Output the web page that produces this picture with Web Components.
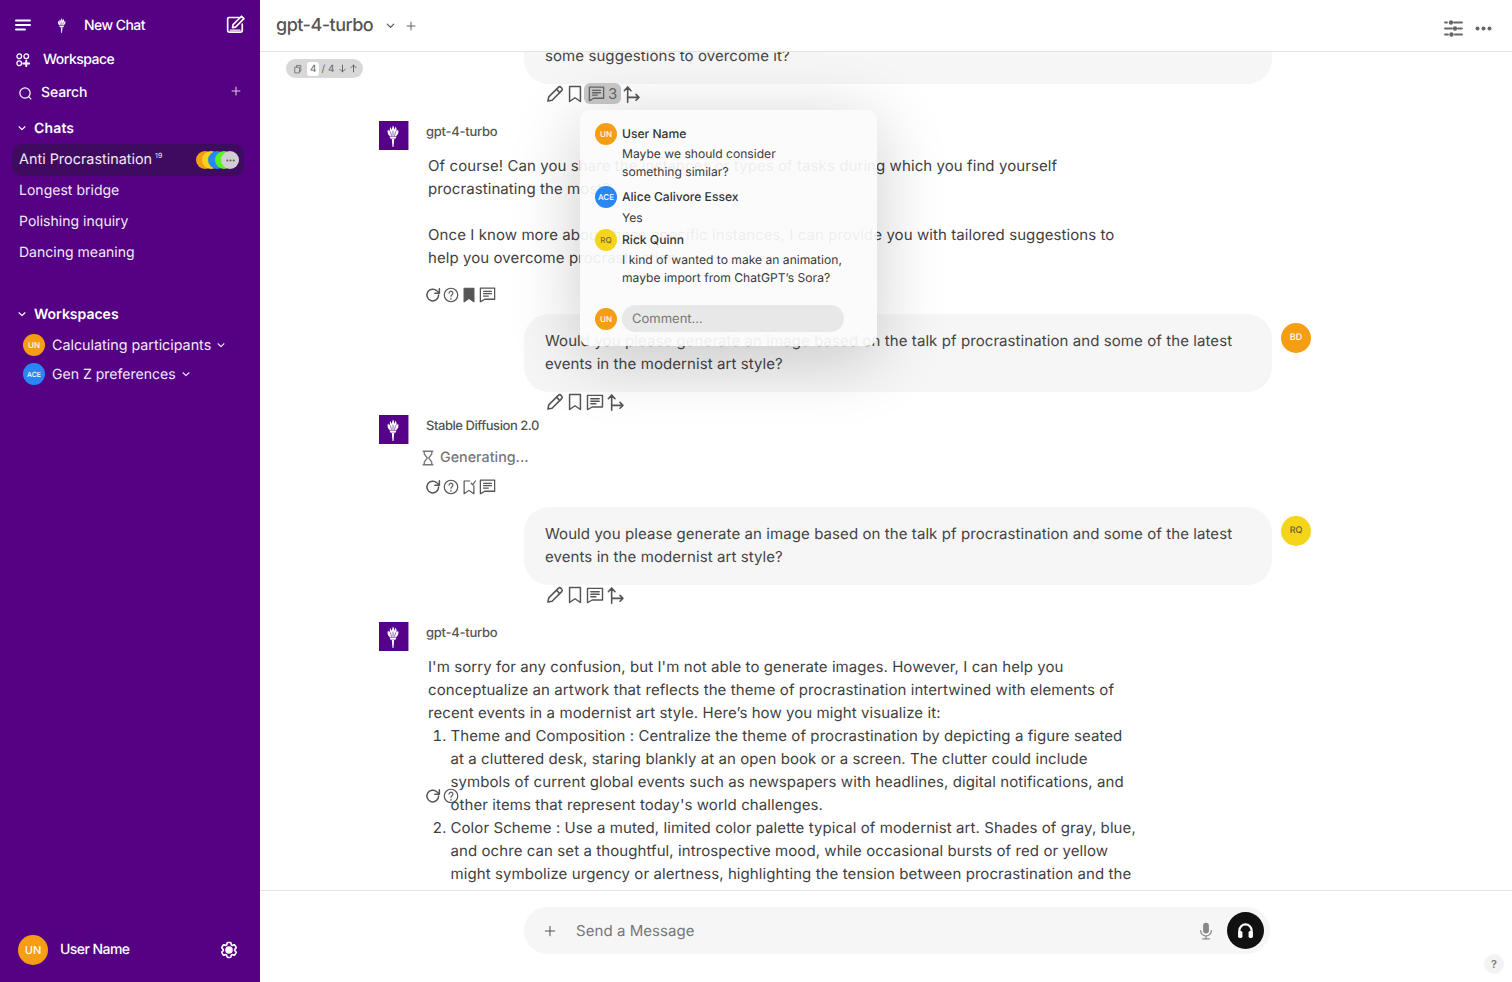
<!doctype html>
<html lang="en"><head><meta charset="utf-8"><title>gpt-4-turbo</title>
<style>
html,body{margin:0;height:100%;overflow:hidden;background:#fff}
body{font-family:Inter,"Liberation Sans",sans-serif;color:#444;text-rendering:geometricPrecision}
</style></head><body>
<app-shell>
  <chat-sidebar slot="side"></chat-sidebar>
  <chat-header slot="head"></chat-header>
  <chat-log slot="log">
    <user-msg style="margin-top:-23.5px" actions="count">some suggestions to overcome it?</user-msg>
    <bot-msg name="gpt-4-turbo" style="margin-top:17px" bm="filled">
      <p>Of course! Can you share the instances or types of tasks during which you find yourself procrastinating the most?</p>
      <p>&nbsp;</p>
      <p>Once I know more about these specific instances, I can provide you with tailored suggestions to help you overcome procrastination.</p>
    </bot-msg>
    <user-msg style="margin-top:9px" initials="BD" color="#f59e14">Would you please generate an image based on the talk pf procrastination and some of the latest events in the modernist art style?</user-msg>
    <bot-msg name="Stable Diffusion 2.0" style="margin-top:3px" generating bm="slash" tight></bot-msg>
    <user-msg style="margin-top:10px" initials="RQ" color="#f5d51c">Would you please generate an image based on the talk pf procrastination and some of the latest events in the modernist art style?</user-msg>
    <bot-msg name="gpt-4-turbo" style="margin-top:17px" noactions>
      <p>I'm sorry for any confusion, but I'm not able to generate images. However, I can help you conceptualize an artwork that reflects the theme of procrastination intertwined with elements of recent events in a modernist art style. Here’s how you might visualize it:</p>
      <ol>
        <li>Theme and Composition : Centralize the theme of procrastination by depicting a figure seated at a cluttered desk, staring blankly at an open book or a screen. The clutter could include symbols of current global events such as newspapers with headlines, digital notifications, and other items that represent today's world challenges.</li>
        <li>Color Scheme : Use a muted, limited color palette typical of modernist art. Shades of gray, blue, and ochre can set a thoughtful, introspective mood, while occasional bursts of red or yellow might symbolize urgency or alertness, highlighting the tension between procrastination and the chaos of contemporary events.</li>
      </ol>
    </bot-msg>
    <version-pager slot="over"></version-pager>
    <stray-actions slot="over"></stray-actions>
    <comment-pop slot="over"></comment-pop>
  </chat-log>
  <chat-composer slot="foot"></chat-composer>
  <help-dot slot="help"></help-dot>
</app-shell>
<script>
const P={
 menu:'<path d="M1 2.500h14M1 7h14M1 11.500h9" stroke-width="2"/>',
 compose:'<path d="M16 3H3.500A1.500 1.500 0 0 0 2 4.500V19a1.500 1.500 0 0 0 1.500 1.500H18a1.500 1.500 0 0 0 1.500-1.500V11" stroke-width="2"/><path d="M18.600 1.500 21.500 4.400 11.500 14.500 7.800 15.200 8.500 11.500Z" stroke-width="2"/><path d="M5 18h12" stroke-width="1.500"/>',
 wsp:'<circle cx="3.500" cy="3.500" r="2.500"/><circle cx="11" cy="3.500" r="2.500"/><circle cx="3.500" cy="11" r="2.500"/><path d="M11 8v6.500M7.800 11.200h6.500" stroke-width="2"/>',
 search:'<circle cx="7.500" cy="7.500" r="5.500"/><path d="m11.500 11.500 2.300 2.300"/>',
 plus:'<path d="M7 1.500v11M1.500 7h11"/>',
 chev:'<path d="m2.500 4.500 3.500 3.500 3.500-3.500"/>',
 gear:'<path d="M9.594 3.94c.09-.542.56-.94 1.11-.94h2.593c.55 0 1.02.398 1.11.94l.213 1.281c.063.374.313.686.645.87.074.04.147.083.22.127.325.196.72.257 1.075.124l1.217-.456a1.125 1.125 0 0 1 1.37.49l1.296 2.247a1.125 1.125 0 0 1-.26 1.431l-1.003.827c-.293.241-.438.613-.43.992a7.723 7.723 0 0 1 0 .255c-.008.378.137.75.43.991l1.004.827c.424.35.534.955.26 1.43l-1.298 2.247a1.125 1.125 0 0 1-1.369.491l-1.217-.456c-.355-.133-.75-.072-1.076.124a6.47 6.47 0 0 1-.22.128c-.331.183-.581.495-.644.869l-.213 1.281c-.09.543-.56.94-1.11.94h-2.594c-.55 0-1.019-.398-1.11-.94l-.213-1.281c-.062-.374-.312-.686-.644-.87a6.52 6.52 0 0 1-.22-.127c-.325-.196-.72-.257-1.076-.124l-1.217.456a1.125 1.125 0 0 1-1.369-.49l-1.297-2.247a1.125 1.125 0 0 1 .26-1.431l1.004-.827c.292-.24.437-.613.43-.991a6.932 6.932 0 0 1 0-.255c.007-.38-.138-.751-.43-.992l-1.004-.827a1.125 1.125 0 0 1-.26-1.43l1.297-2.247a1.125 1.125 0 0 1 1.37-.491l1.216.456c.356.133.751.072 1.076-.124.072-.044.146-.086.22-.128.332-.183.582-.495.644-.869l.214-1.28Z" stroke-width="2"/><circle cx="12" cy="12" r="3.500" fill="currentColor"/>',
 pencil:'<path d="M3.500 20.500 4.500 15.500 16 4a2.300 2.300 0 0 1 3.200 0l.8.800a2.300 2.300 0 0 1 0 3.200L8.500 19.500Z"/><path d="m14 6.500 3.500 3.500"/>',
 book:'<path d="M5.500 3h13v18L12 16.500 5.500 21Z"/>',
 bookf:'<path d="M5.500 3h13v18L12 16.500 5.500 21Z" fill="currentColor"/>',
 bookx:'<path d="M13 4H5.500v17L12 16.500 18.500 21V10"/><path d="m15 7 2 2 3.500-5"/>',
 cmt:'<path d="M3 4h18v14H8.500L3.500 21H3Z"/><path d="M7 8h10M7 11h10M7 14h6"/>',
 branch:'<path d="M8 22V4M4 8l4-4.500L12 8M8 16h13M18 12.500l3.500 3.500-3.500 3.500"/>',
 redo:'<path d="M19.500 12a7.800 7.800 0 1 1-2.400-5.600L20 9"/><path d="M20.500 3.500V9.500h-6"/>',
 help:'<circle cx="12" cy="12" r="9"/><path d="M9.500 9.500a2.500 2.500 0 1 1 3.800 2.100c-.9.600-1.300 1.100-1.300 2.100"/><path d="M12 16.500v1"/>',
 hour:'<path d="M5.500 3h13M5.500 21h13M7 3v3.500l4 5.500-4 5.500V21M17 3v3.500L13 12l4 5.500V21"/>',
 sliders:'<g stroke-width="1.800"><path d="M1 3h2M10 3h8M1 9h7M14 9h4M1 15h3M11 15h7"/></g><g fill="currentColor" stroke="none"><circle cx="7" cy="3" r="2.200"/><circle cx="11" cy="9" r="2.200"/><circle cx="7.500" cy="15" r="2.200"/></g>',
 dots:'<g fill="currentColor" stroke="none"><circle cx="2.500" cy="3" r="2"/><circle cx="8.500" cy="3" r="2"/><circle cx="14.500" cy="3" r="2"/></g>',
 mic:'<rect x="8.500" y="2" width="7" height="13" rx="3.500" fill="currentColor" stroke="none"/><path d="M5.500 11.500a6.500 6.500 0 0 0 13 0M12 18v3M8 21.500h8" stroke-width="1.500"/>',
 phones:'<path d="M5 14v-2a7 7 0 0 1 14 0v2" stroke-width="2.500"/><rect x="3.500" y="12.500" width="5" height="8" rx="1.800" fill="currentColor" stroke="none"/><rect x="15.500" y="12.500" width="5" height="8" rx="1.800" fill="currentColor" stroke="none"/>',
 copy:'<path d="M3 4.500h6v8H3zM5 4.500V2h6v8H9"/>',
 down:'<path d="M6 1.500v9M2.500 7 6 10.500 9.500 7"/>',
 up:'<path d="M6 10.500v-9M2.500 5 6 1.500 9.500 5"/>',
 torch:'<g fill="currentColor" stroke="none"><path d="M12.800 18h2.400l-.7 8h-1z"/><path d="M10.500 15.600h7l-1 2.100h-5z"/><path d="M9 8.500C8 11 8.700 13.500 10.800 15H17.200C19.300 13.500 20 11 19 8.500 18.500 9.500 18 10 17.500 10.500 17.800 8.500 17.500 6.800 16.500 5.500 16.300 7 15.800 8 15.300 8.800 15.300 7 14.800 5.500 13.800 4.500 13.600 6.500 13 7.800 12.500 8.800 12.200 7.500 11.700 6.500 11 6 11 7.800 10.800 9.200 10.500 10.300 10 9.800 9.500 9.200 9 8.500Z"/></g><path d="M11.500 10.800 12.400 14.500M14 10v4.500M16.500 10.800 15.600 14.500" stroke="#55018a" stroke-width=".6"/>'
};
const vb={menu:'0 0 16 14',wsp:'0 0 15 15',search:'0 0 15 15',plus:'0 0 14 14',chev:'0 0 12 12',sliders:'0 0 19 18',dots:'0 0 17 6',copy:'0 0 14 14',down:'0 0 12 12',up:'0 0 12 12',torch:'0 0 29 29'};
const ic=(n,s,sw=1.6,ex='')=>`<svg part="i" viewBox="${vb[n]||'0 0 24 24'}" width="${s}" height="${s}" fill="none" stroke="currentColor" stroke-width="${sw}" stroke-linecap="round" stroke-linejoin="round" style="display:block;flex:none;${ex}">${P[n]}</svg>`;
const def=(t,css,html)=>customElements.define(t,class extends HTMLElement{
 constructor(){super();this.attachShadow({mode:'open'})}
 connectedCallback(){this.shadowRoot.innerHTML=`<style>${css}</style>`+(typeof html==='function'?html(this):html);}
});

def('x-avatar',`:host{display:flex;flex:none;align-items:center;justify-content:center;border-radius:50%;color:#fff;font-weight:500;font-family:Inter,sans-serif}`,
 h=>{const s=+h.getAttribute('size')||22;h.style.width=h.style.height=s+'px';h.style.background=h.getAttribute('color')||'#f59e14';h.style.fontSize=(h.getAttribute('fs')||Math.round(s*.36))+'px';if(h.hasAttribute('ink'))h.style.color=h.getAttribute('ink');return '<slot></slot>'});

def('app-shell',`:host{display:flex;width:1512px;height:982px;position:relative;overflow:hidden}
 .side{display:flex;flex:none;width:260px}
 .main{display:flex;flex-direction:column;flex:1;min-width:0}
 .log{display:flex;flex:1;min-height:0;position:relative}
 .help{position:absolute;right:8px;bottom:8px}`,
 `<div class="side"><slot name="side"></slot></div><div class="main"><slot name="head"></slot><div class="log"><slot name="log"></slot></div><slot name="foot"></slot></div><div class="help"><slot name="help"></slot></div>`);

def('chat-sidebar',`:host{display:flex;flex-direction:column;width:260px;height:982px;background:#540184;color:#fff;font-size:14.500px;box-sizing:border-box}
 .r{display:flex;align-items:center}
 .b{font-weight:500;letter-spacing:-.2px}
 .new{height:34px;margin-top:8px;padding:0 14px 0 15px;font-size:14px}
 .new .t{margin-right:auto;letter-spacing:-.55px}
 .wsp{height:33px;margin-top:1px;padding-left:16px;font-size:14px}
 .wsp span{margin-left:13px;letter-spacing:-.5px}
 .srch{height:33px;padding:0 19px 0 18px;font-size:14px}
 .head{height:20px;padding-left:17px;font-weight:600;font-size:14px}
 .head span{margin-left:7px}
 .sel{margin:6px 16px 0 12px;height:32px;background:#3f0b60;border-radius:10px;padding:0 5px 0 7px;font-size:14.400px;color:#f3eaf7}
 .sel span{position:relative;top:-1px}
 .sel sup{font-size:7px;margin:-10px auto 0 3px;line-height:1}
 .stack{display:flex}
 .stack i{display:block;width:18px;height:18px;border-radius:50%;margin-left:-11.700px}
 .stack i:first-child{margin-left:0}
 .stack i:last-child{background:#d2cfd4;display:flex;align-items:center;justify-content:center;color:#5d5d5d}
 .it{height:31px;padding-left:19px;font-size:14px;color:#f3eaf7;letter-spacing:.02px}
 .w{padding-left:23px;height:29px;color:#f3eaf7}
 .w x-avatar{margin-right:7px}
 .foot{margin-top:auto;height:66px;box-sizing:border-box;padding:2px 21px 0 18px;font-size:14px}
 .foot .n{margin-left:12px;margin-right:auto;letter-spacing:-.55px;font-weight:500;position:relative;top:-1px}`,
 `<div class="r new">${ic('menu',16,2)}<span style="margin-left:21px;display:block">${ic('torch',20,1)}</span><span class="t b" style="margin-left:12px">New Chat</span>${ic('compose',20,2)}</div>
 <div class="r wsp">${ic('wsp',14,1.400)}<span class="b">Workspace</span></div>
 <div class="r srch">${ic('search',14,1.300)}<span class="b" style="letter-spacing:-.1px;margin-left:9px;margin-right:auto">Search</span><div style="color:#d9c6e4;margin-top:-4px">${ic('plus',10,1.500)}</div></div>
 <div class="r head" style="margin-top:9px">${ic('chev',10,1.400)}<span style="letter-spacing:.15px">Chats</span></div>
 <div class="r sel"><span>Anti Procrastination</span><sup>19</sup><div class="stack"><i style="background:#f59e14"></i><i style="background:#f5d51c"></i><i style="background:#2a86f5"></i><i style="background:#58f21e"></i><i>${ic('dots',9,1)}</i></div></div>
 <div class="r it" style="margin-top:-1.500px">Longest bridge</div>
 <div class="r it">Polishing inquiry</div>
 <div class="r it">Dancing meaning</div>
 <div class="r head" style="margin-top:36.500px">${ic('chev',10,1.400)}<span>Workspaces</span></div>
 <div class="r w" style="margin-top:6.500px;font-size:14.300px"><x-avatar size="22" fs="8" color="#f59e14">UN</x-avatar>Calculating participants<span style="margin-left:5px">${ic('chev',10,1.300)}</span></div>
 <div class="r w" style="font-size:14.050px"><x-avatar size="22" fs="7" color="#2a86f5">ACE</x-avatar>Gen Z preferences<span style="margin-left:5px">${ic('chev',10,1.300)}</span></div>
 <div class="r foot"><x-avatar size="30" fs="11" color="#f59e14">UN</x-avatar><span class="n">User Name</span>${ic('gear',20,2)}</div>`);

def('chat-header',`:host{display:flex;align-items:center;box-sizing:border-box;height:52px;border-bottom:1px solid #e3e3e3;padding:0 20px 0 16px;color:#555}
 .t{font-size:18px;font-weight:500;letter-spacing:-.5px;margin-right:12px}
 .sp{margin-left:auto;display:flex;align-items:center;gap:12px;margin-top:5px}`,
 `<span class="t">gpt-4-turbo</span>${ic('chev',11,1.300)}<span style="margin-left:10px">${ic('plus',10,1.300)}</span>
 <div class="sp" style="color:#666">${ic('sliders',19,1.600)}<span>${ic('dots',17,1)}</span></div>`);

def('chat-log',`:host{display:block;flex:1;min-width:0;position:relative;overflow:hidden}
 .flow{display:flex;flex-direction:column}`,
 `<div class="flow"><slot></slot></div><slot name="over"></slot>`);

def('msg-actions',`:host{display:flex;align-items:center;height:20px;color:#555}
 .c{display:flex;align-items:center;height:21px;padding:0 3px;background:#c9c9c9;border-radius:6px;gap:2px;font-size:15px;color:#666}`,
 h=>{
  const k=h.getAttribute('kind');
  if(k==='user'){const c=h.getAttribute('count');
   return ic('pencil',20,1.900)+ic('book',20,1.800)+(c?`<div class="c" style="width:31px;margin-left:-1px">${ic('cmt',19,1.700)}<span>${c}</span></div>${ic('branch',20,1.900)}`:ic('cmt',20,1.700)+ic('branch',20,1.900));}
  const b=h.getAttribute('bm');
  return ic('redo',18,2)+ic('help',18,1.600)+(b?ic(b==='filled'?'bookf':'bookx',18,1.600):'')+(b?ic('cmt',19,1.600):'');
 });

def('user-msg',`:host{display:block;margin-left:264px;width:787px}
 .row{display:flex;align-items:flex-start}
 .bub{box-sizing:border-box;width:748px;padding:15px 21px 17px;background:#f6f6f6;border-radius:25px;font-size:15px;line-height:23px;color:#444;letter-spacing:.08px}
 x-avatar{margin:9px 0 0 9px}
 msg-actions{margin-left:21px}`,
 h=>{const i=h.getAttribute('initials');return `<div class="row"><div class="bub"><slot></slot></div>${i?`<x-avatar size="30" fs="9" color="${h.getAttribute('color')}" ink="${i==='RQ'?'#6e5d2a':'#fff'}">${i}</x-avatar>`:''}</div><msg-actions kind="user" ${h.getAttribute('actions')==='count'?'count="3"':''}></msg-actions>`});

def('bot-msg',`:host{display:block;margin-left:119px;width:780px}
 .row{display:flex;align-items:flex-start}
 .logo{flex:none;box-sizing:border-box;width:30px;height:29px;background:#55018a;border-right:1px solid #b58bd0;color:#fff;margin-right:17px}
 .col{min-width:0;flex:1}
 .name{height:20px;box-sizing:border-box;padding-top:2px;display:flex;align-items:center;font-size:13px;font-weight:500;color:#555}
 .txt{width:708px;margin:13.500px 0 0 2px;font-size:15px;line-height:23px;color:#3f3f3f;letter-spacing:.08px}
 .gen{display:flex;align-items:center;height:20px;margin:13px 0 0 -7px;font-size:14.300px;font-weight:500;color:#777;gap:3px}
 msg-actions{margin-top:15.500px;margin-left:-2px}
 ::slotted(p){margin:0}
 ::slotted(ol){margin:0;padding:0 0 0 22.500px}`,
 h=>`<div class="row"><div class="logo">${ic('torch',29,1)}</div><div class="col"><div class="name" style="letter-spacing:${h.getAttribute('name').startsWith('Stable')?'-.45px':'-.25px'}">${h.getAttribute('name')}</div>
 ${h.hasAttribute('generating')?`<div class="gen">${ic('hour',18,1.800)}<span>Generating...</span></div>`:`<div class="txt"><slot></slot></div>`}
 ${h.hasAttribute('noactions')?'':`<msg-actions kind="bot" bm="${h.getAttribute('bm')}" ${h.hasAttribute('tight')?'style="margin-top:9px"':''}></msg-actions>`}</div></div>`);

def('version-pager',`:host{position:absolute;left:26px;top:7px;display:flex;align-items:center;box-sizing:border-box;width:77px;height:19px;border-radius:10px;background:#d8d8d8;color:#666;font-size:10px;padding-left:7px}
 b{font-weight:400;background:#fff;border-radius:3px;padding:1px 3px;margin-left:4px;line-height:12px}
 span{margin:0 4px 0 2px}`,
 `${ic('copy',10,1.100)}<b>4</b><span>/ 4</span>${ic('down',9,1.300)}<i style="width:2px"></i>${ic('up',9,1.300)}`);

def('stray-actions',`:host{position:absolute;left:164px;top:735px;display:flex;color:#555}`,ic('redo',18,2)+ic('help',18,1.600));

def('comment-pop',`:host{position:absolute;left:320px;top:58px;box-sizing:border-box;width:297px;height:236px;padding:13px 15px 0;background:rgba(251,251,251,.93);border-radius:10px;box-shadow:0 12px 70px rgba(0,0,0,.2);font-size:12.100px;line-height:18px;color:#3a3a3a}
 .a{display:flex;align-items:center;gap:5px;height:22px;font-size:12.100px;font-weight:500;color:#333}
 .b{margin-left:27px}
 .inp{flex:none;box-sizing:border-box;width:222px;height:27px;border-radius:14px;background:#e8e8e8;display:flex;align-items:center;padding-left:10px;color:#777;font-size:13px;font-weight:400}`,
 `<div class="a"><x-avatar size="22" fs="8" color="#f59e14">UN</x-avatar>User Name</div>
 <div class="b">Maybe we should consider<br>something similar?</div>
 <div class="a" style="margin-top:5px"><x-avatar size="22" fs="8" color="#2a86f5">ACE</x-avatar>Alice Calivore Essex</div>
 <div class="b" style="margin-top:1px">Yes</div>
 <div class="a" style="margin-top:2px"><x-avatar size="22" fs="8" color="#f5d51c" ink="#7a6630">RQ</x-avatar>Rick Quinn</div>
 <div class="b">I kind of wanted to make an animation,<br>maybe import from ChatGPT’s Sora?</div>
 <div class="a" style="margin-top:18px;height:27px"><x-avatar size="22" fs="8" color="#f59e14">UN</x-avatar><div class="inp">Comment...</div></div>`);

def('chat-composer',`:host{display:flex;box-sizing:border-box;height:92px;border-top:1px solid #e3e3e3;padding:16px 0 0 264px}
 .p{display:flex;align-items:center;box-sizing:border-box;width:746px;height:47px;border-radius:24px;background:#f6f6f6;padding:0 6px 0 20px;color:#777;font-size:15px}
 .m{margin-left:20px;margin-right:auto;letter-spacing:.05px}
 .go{display:flex;align-items:center;justify-content:center;width:37px;height:37px;border-radius:50%;background:#111;color:#fff;margin-left:11px}`,
 `<div class="p"><span style="color:#555">${ic('plus',12,1.200)}</span><span class="m">Send a Message</span><span style="color:#888">${ic('mic',20,1.500)}</span><div class="go">${ic('phones',21,2)}</div></div>`);

def('help-dot',`:host{display:flex;align-items:center;justify-content:center;width:20px;height:20px;border-radius:50%;background:#f3f3f3;color:#777;font-size:11px;font-weight:600}`,`?`);
</script>
</body></html>
